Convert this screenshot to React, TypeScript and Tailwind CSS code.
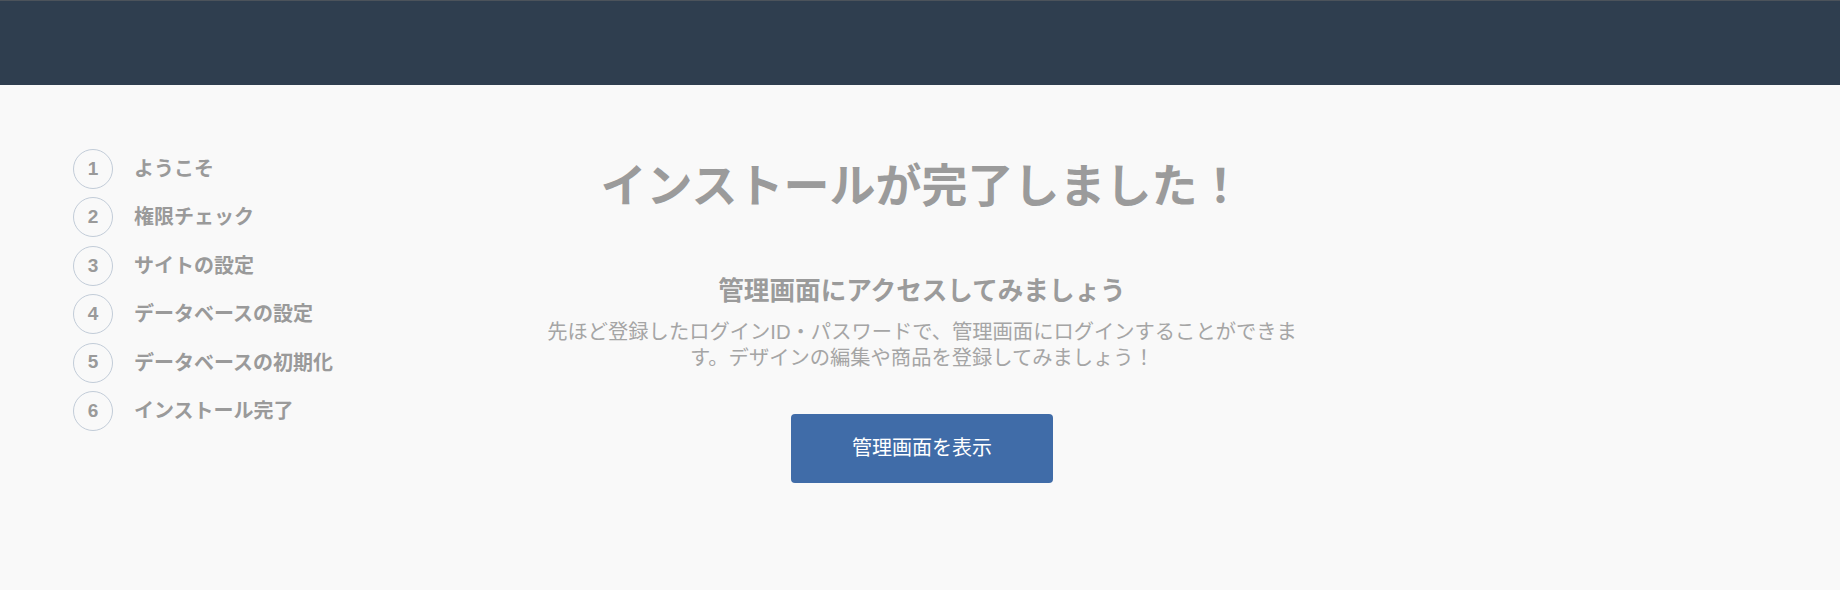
const STEPS = [
  'ようこそ',
  '権限チェック',
  'サイトの設定',
  'データベースの設定',
  'データベースの初期化',
  'インストール完了',
]

const FONT = "font-['Liberation_Sans','Noto_Sans_CJK_JP',sans-serif]"

function StepList() {
  return (
    <ol className="flex flex-col gap-[8.4px] pl-[73px] pt-[64px]">
      {STEPS.map((label, i) => (
        <li key={label} className="flex items-center gap-[21px]">
          <span className="flex h-10 w-10 shrink-0 items-center justify-center rounded-full border border-[#c2ccd8] text-[19px] font-bold text-[#9a9a9a]">
            {i + 1}
          </span>
          <span className="text-[20px] font-bold text-[#9a9a9a]">{label}</span>
        </li>
      ))}
    </ol>
  )
}

export default function App() {
  return (
    <div className={`min-h-screen bg-[#f9f9f9] ${FONT}`}>
      <header className="h-[85px] border-t border-[#4c535b] bg-[#2f3e4f]" />
      <div className="flex">
        <aside className="w-[340px] shrink-0">
          <StepList />
        </aside>
        <main className="flex flex-1 flex-col items-center pl-[4px] pt-[78px] text-center">
          <h1 className="text-[46px] font-bold leading-none text-[#9b9b9b]">
            インストールが完了しました！
          </h1>
          <h2 className="mt-[70px] text-[25.6px] font-bold leading-none text-[#9b9b9b]">
            管理画面にアクセスしてみましょう
          </h2>
          <p className="mt-[14px] w-[765px] text-[20.3px] leading-[26px] text-[#a5a5a5]">
            先ほど登録したログインID・パスワードで、管理画面にログインすることができます。デザインの編集や商品を登録してみましょう！
          </p>
          <button
            type="button"
            className="mt-[43px] h-[69px] w-[262px] rounded-[4px] bg-[#406ca8] text-[20px] text-white"
          >
            管理画面を表示
          </button>
        </main>
        <div className="w-[340px] shrink-0" />
      </div>
    </div>
  )
}
